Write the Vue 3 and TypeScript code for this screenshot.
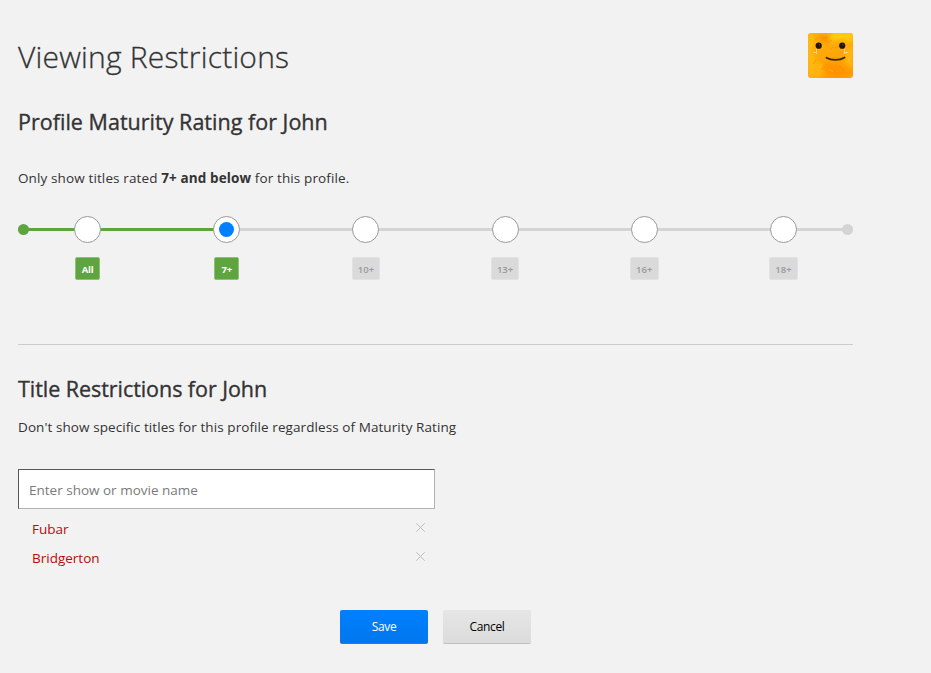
<script setup lang="ts">
import { computed, ref } from 'vue'

interface Rating {
  label: string
}

const profile = 'John'
const ratings: Rating[] = [
  { label: 'All' },
  { label: '7+' },
  { label: '10+' },
  { label: '13+' },
  { label: '16+' },
  { label: '18+' },
]
const selected = ref(1)
const blocked = ref<string[]>(['Fubar', 'Bridgerton'])
const query = ref('')

const fillWidth = computed(() => `${((selected.value + 0.5) / ratings.length) * 100}%`)

function removeTitle(title: string): void {
  blocked.value = blocked.value.filter((t) => t !== title)
}
</script>

<template>
  <main class="page">
    <header class="header">
      <h1 class="title">Viewing Restrictions</h1>
      <svg class="avatar" viewBox="0 0 45 45" aria-hidden="true">
        <defs>
          <linearGradient id="fur" x1="0" y1="0" x2="0.4" y2="1">
            <stop offset="0" stop-color="#ffb00c" />
            <stop offset="0.5" stop-color="#ffa90a" />
            <stop offset="1" stop-color="#ff9c06" />
          </linearGradient>
          <filter id="soft" x="-20%" y="-20%" width="140%" height="140%">
            <feGaussianBlur stdDeviation="1.9" />
          </filter>
          <clipPath id="frame"><rect width="45" height="45" rx="3" /></clipPath>
        </defs>
        <g clip-path="url(#frame)">
          <rect width="45" height="45" fill="url(#fur)" />
          <g filter="url(#soft)">
            <path d="M0 0H7L4 18L8 30L3 45H0Z" fill="#ffbb0a" />
            <path d="M24 0H45V9L34 6L22 8Z" fill="#ffd00c" />
            <path d="M4 34L15 27L18 37L12 45H3Z" fill="#ffb408" />
            <path d="M37 17L45 12V35L38 31Z" fill="#ffb80a" />
            <path d="M8 2L22 4L18 11L14 8Z" fill="#f78f05" />
            <path d="M14 30L31 31L40 40L29 45L17 40Z" fill="#ff9300" />
          </g>
          <g fill="none" stroke-width="0.8" opacity="0.6">
            <path d="M7 7L10 5M15 6L19 4M20 10L24 7M27 15L31 13M5 31L8 27M31 33L36 37M13 37L17 34M22 17L25 14" stroke="#e98200" />
            <path d="M11 35L14 31M21 36L25 39M2 14L4 10M40 28L42 24M31 5L35 3" stroke="#ffe13b" />
          </g>
          <circle cx="10.7" cy="12.7" r="3.1" fill="#211604" />
          <circle cx="34.2" cy="12.7" r="3.1" fill="#211604" />
          <circle cx="11.4" cy="11.8" r="0.6" fill="#6b5b36" />
          <circle cx="34.9" cy="11.8" r="0.6" fill="#6b5b36" />
          <path d="M8.5 16V21M5 19.5H8M36.5 16V21M37 19.5H40" stroke="#ffdf8e" stroke-width="0.9" fill="none" />
          <path d="M18.4 24.7C23 27.6 31.5 27.8 36.6 24.5" stroke="#3a2505" stroke-width="1.8" fill="none" stroke-linecap="round" />
        </g>
      </svg>
    </header>

    <section class="maturity">
      <h2 class="heading heading-maturity">Profile Maturity Rating for {{ profile }}</h2>
      <p class="copy rated">
        Only show titles rated <b>{{ ratings[selected].label }} and below</b> for this profile.
      </p>
      <div class="slider">
        <div class="track"><div class="fill" :style="{ width: fillWidth }"></div></div>
        <button
          v-for="(r, i) in ratings"
          :key="r.label"
          type="button"
          class="stop"
          :class="{ on: i <= selected, current: i === selected }"
          @click="selected = i"
        >
          <span class="knob"></span>
          <span class="badge">{{ r.label }}</span>
        </button>
      </div>
    </section>

    <section class="titles">
      <h2 class="heading heading-titles">Title Restrictions for {{ profile }}</h2>
      <p class="copy hint">Don't show specific titles for this profile regardless of Maturity Rating</p>
      <input v-model="query" class="search" type="text" placeholder="Enter show or movie name" />
      <ul class="blocked">
        <li v-for="t in blocked" :key="t" class="row">
          <span>{{ t }}</span>
          <svg class="remove" viewBox="0 0 9 9" @click="removeTitle(t)">
            <path d="M0.3 0.3L8.7 8.7M8.7 0.3L0.3 8.7" />
          </svg>
        </li>
      </ul>
    </section>

    <footer class="actions">
      <button type="button" class="btn save">Save</button>
      <button type="button" class="btn cancel">Cancel</button>
    </footer>
  </main>
</template>

<style>
body {
  background: #f2f2f2;
}
</style>

<style scoped>
.page {
  box-sizing: border-box;
  width: 871px;
  min-height: 673px;
  padding: 33px 18px 29px;
  color: #333;
  font-family: 'Open Sans', 'Noto Sans', sans-serif;
}
.header {
  display: flex;
  align-items: center;
  justify-content: space-between;
  height: 45px;
}
.title {
  margin: 2px 0 0;
  font-size: 30px;
  font-weight: 300;
  line-height: 44px;
  letter-spacing: 0.2px;
  -webkit-text-stroke: 0.3px #333;
  white-space: nowrap;
}
.avatar {
  width: 45px;
  height: 45px;
}
.heading {
  margin: 0;
  font-size: 21.5px;
  font-weight: 400;
  line-height: 30px;
  -webkit-text-stroke: 0.35px #333;
  white-space: nowrap;
}
.heading-maturity {
  letter-spacing: 0.02px;
}
.heading-titles {
  letter-spacing: -0.05px;
}
.copy {
  margin: 0;
  font-size: 13.5px;
  line-height: 20px;
  white-space: nowrap;
}
.maturity {
  padding: 29px 0 64px;
  border-bottom: 1px solid #ccc;
}
.rated {
  margin-top: 31px;
  letter-spacing: 0.12px;
}
.slider {
  position: relative;
  display: grid;
  grid-template-columns: repeat(6, 1fr);
  margin-top: 28px;
}
.track {
  position: absolute;
  top: 12px;
  left: 0;
  right: 0;
  height: 3px;
  background: #d4d4d4;
}
.track::before,
.track::after {
  content: '';
  position: absolute;
  top: -4px;
  width: 11px;
  height: 11px;
  border-radius: 50%;
}
.track::before {
  left: 0;
  background: #5fa53f;
}
.track::after {
  right: 0;
  background: #d4d4d4;
}
.fill {
  height: 3px;
  background: #5fa53f;
}
.stop {
  position: relative;
  display: flex;
  flex-direction: column;
  align-items: center;
  gap: 14px;
  padding: 0;
  border: 0;
  background: none;
  font-family: inherit;
}
.knob {
  display: flex;
  align-items: center;
  justify-content: center;
  box-sizing: border-box;
  width: 27px;
  height: 27px;
  border: 1px solid #999;
  border-radius: 50%;
  background: #fff;
}
.current .knob::after {
  content: '';
  width: 15px;
  height: 15px;
  border-radius: 50%;
  background: #0080ff;
}
.badge {
  box-sizing: border-box;
  min-width: 25px;
  height: 23px;
  padding: 0 5.2px;
  border: 1px solid #e2e2e2;
  border-radius: 2px;
  background: #dadada;
  color: #999;
  font-size: 9.5px;
  font-weight: 600;
  line-height: 23px;
}
.on .badge {
  border-color: #8fc079;
  background: #5fa53f;
  color: #fff;
  font-weight: 700;
  letter-spacing: -0.2px;
}
.titles {
  padding-top: 29px;
}
.hint {
  margin-top: 13px;
  letter-spacing: 0.08px;
}
.search {
  display: block;
  box-sizing: border-box;
  width: 417px;
  height: 40px;
  margin: 32px 0 0;
  padding: 1px 10px 0;
  border: 1px solid #b2b2b2;
  border-top-color: #595959;
  border-left-color: #595959;
  border-radius: 0;
  outline: 0;
  background: #fff;
  font-family: inherit;
  font-size: 13.5px;
}
.search::placeholder {
  color: #7a7a7a;
}
.blocked {
  width: 417px;
  margin: 5px 0 0;
  padding: 0;
  list-style: none;
}
.row {
  display: flex;
  justify-content: space-between;
  box-sizing: border-box;
  height: 29px;
  padding: 0 10px 0 14px;
  color: #b9090b;
  font-size: 13.5px;
  line-height: 30px;
}
.remove {
  width: 9px;
  height: 9px;
  margin-top: 9px;
  cursor: pointer;
}
.remove path {
  fill: none;
  stroke: #bdbdbd;
  stroke-width: 1;
}
.actions {
  display: flex;
  gap: 15px;
  padding: 38px 0 0 322px;
}
.btn {
  box-sizing: border-box;
  width: 88px;
  height: 34px;
  padding: 0;
  border: 0;
  border-bottom: 1px solid;
  border-radius: 2px;
  font-family: inherit;
  font-size: 12px;
  line-height: 34px;
  letter-spacing: -0.35px;
}
.save {
  border-color: #666f78;
  background: linear-gradient(#0080ff, #0077ee);
  color: #fff;
}
.cancel {
  border-color: #bfbfbf;
  background: linear-gradient(#e6e6e6, #dcdcdc);
  color: #000;
}
</style>
